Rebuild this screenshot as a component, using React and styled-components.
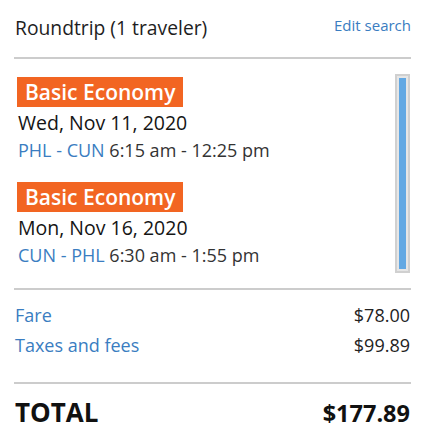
import React from 'react';
import styled, { createGlobalStyle } from 'styled-components';

const GlobalStyle = createGlobalStyle`
  html, body {
    margin: 0;
    padding: 0;
    background: #fff;
  }
  body {
    font-family: "Open Sans", "Liberation Sans", sans-serif;
    color: #222;
  }
`;

const blue = '#3a7dc1';
const orange = '#f26522';

const Panel = styled.div`
  width: 426px;
  box-sizing: border-box;
  padding: 15px 15px 0 14px;
`;

const Header = styled.div`
  display: flex;
  justify-content: space-between;
  align-items: flex-start;
  padding-left: 1px;
  margin-bottom: 16px;
`;

const Title = styled.div`
  font-size: 19.3px;
  line-height: 26px;
  color: #1e1e1e;
`;

const EditLink = styled.a`
  font-size: 15px;
  line-height: 20px;
  color: ${blue};
  text-decoration: none;
  cursor: pointer;
`;

const Divider = styled.hr`
  border: none;
  height: 2px;
  background: #cccccc;
  margin: 0;
`;

const Flights = styled.div`
  display: flex;
  align-items: flex-start;
  margin-top: 15px;
  margin-bottom: 15px;
`;

const FlightList = styled.div`
  flex: 1;
  padding: 3px 0 0 3px;
  display: flex;
  flex-direction: column;
  gap: 19px;
`;

const Leg = styled.div`
  display: flex;
  flex-direction: column;
  align-items: flex-start;
`;

const Badge = styled.span`
  display: inline-block;
  background: ${orange};
  color: #fff;
  font-weight: 600;
  font-size: 21px;
  line-height: 30px;
  padding: 0 8px;
  margin-bottom: 2px;
`;

const LegDate = styled.div`
  font-size: 19.5px;
  line-height: 28px;
  color: #151515;
  padding-left: 1px;
`;

const Route = styled.div`
  font-size: 18px;
  line-height: 26px;
  color: #333;
  padding-left: 1px;
`;

const Airports = styled.span`
  color: ${blue};
`;

const ScrollTrack = styled.div`
  width: 11px;
  height: 191px;
  border: 2px solid #d0d0d0;
  background: #e6e6e6;
  padding: 2px 0;
  display: flex;
  justify-content: center;
  margin-right: 1px;
`;

const ScrollThumb = styled.div`
  width: 7px;
  background: #62a8e3;
`;

const Costs = styled.div`
  padding: 10px 1px 22px 1px;
`;

const CostRow = styled.div`
  display: flex;
  justify-content: space-between;
  font-size: 18px;
  line-height: 30px;
`;

const CostLabel = styled.span`
  color: ${blue};
`;

const CostValue = styled.span`
  color: #222;
`;

const TotalRow = styled.div`
  display: flex;
  justify-content: space-between;
  align-items: baseline;
  padding: 11px 1px 0 1px;
  line-height: 34px;
  font-weight: 700;
  color: #111;
`;

const TotalLabel = styled.span`
  font-size: 26px;
`;

const TotalValue = styled.span`
  font-size: 23.5px;
`;

const legs = [
  { date: 'Wed, Nov 11, 2020', route: 'PHL - CUN', time: '6:15 am - 12:25 pm' },
  { date: 'Mon, Nov 16, 2020', route: 'CUN - PHL', time: '6:30 am - 1:55 pm' }
];

const costs = [
  { label: 'Fare', value: '$78.00' },
  { label: 'Taxes and fees', value: '$99.89' }
];

export default function App() {
  return (
    <Panel>
      <GlobalStyle />
      <Header>
        <Title>Roundtrip (1 traveler)</Title>
        <EditLink>Edit search</EditLink>
      </Header>
      <Divider />
      <Flights>
        <FlightList>
          {legs.map((leg) => (
            <Leg key={leg.date}>
              <Badge>Basic Economy</Badge>
              <LegDate>{leg.date}</LegDate>
              <Route>
                <Airports>{leg.route}</Airports> {leg.time}
              </Route>
            </Leg>
          ))}
        </FlightList>
        <ScrollTrack>
          <ScrollThumb />
        </ScrollTrack>
      </Flights>
      <Divider />
      <Costs>
        {costs.map((c) => (
          <CostRow key={c.label}>
            <CostLabel>{c.label}</CostLabel>
            <CostValue>{c.value}</CostValue>
          </CostRow>
        ))}
      </Costs>
      <Divider />
      <TotalRow>
        <TotalLabel>TOTAL</TotalLabel>
        <TotalValue>$177.89</TotalValue>
      </TotalRow>
    </Panel>
  );
}
